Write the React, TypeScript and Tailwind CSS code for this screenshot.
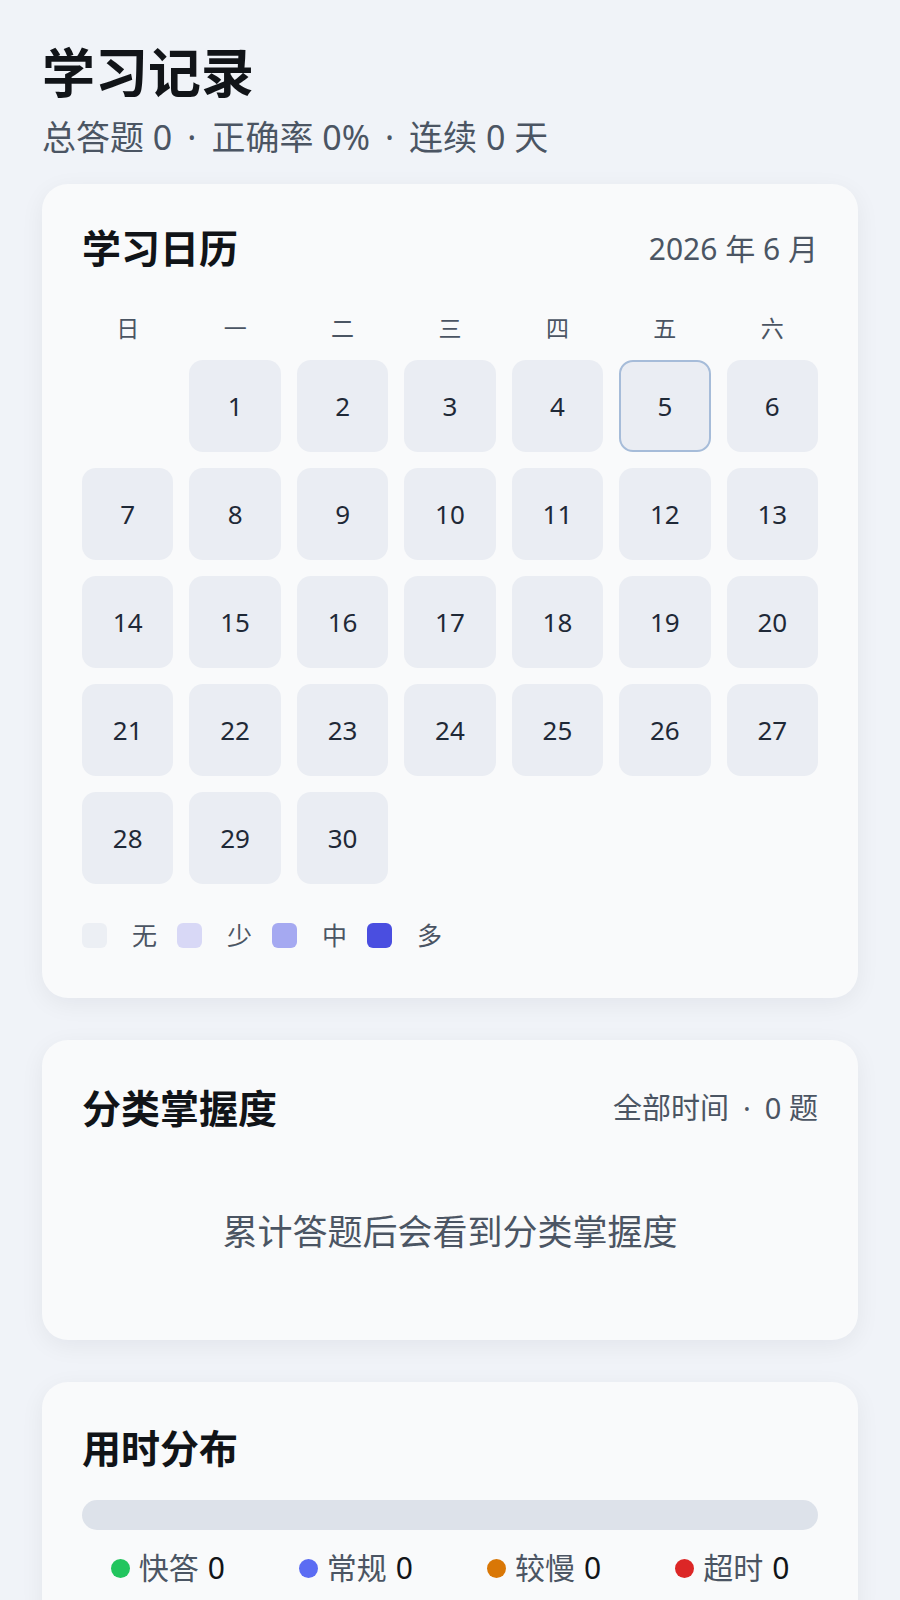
import React from 'react';

const FONT = { fontFamily: '"Noto Sans", "Noto Sans CJK SC", sans-serif' };

const WEEKDAYS = ['日', '一', '二', '三', '四', '五', '六'];

const LEVELS = [
  { label: '无', color: 'bg-[#eceff4]' },
  { label: '少', color: 'bg-[#d8d8f6]' },
  { label: '中', color: 'bg-[#a5a9f1]' },
  { label: '多', color: 'bg-[#4a4ee0]' },
];

const TIMING = [
  { label: '快答', dot: 'bg-[#22c55e]' },
  { label: '常规', dot: 'bg-[#5b6cf3]' },
  { label: '较慢', dot: 'bg-[#d97706]' },
  { label: '超时', dot: 'bg-[#dc2626]' },
];

function Dot({ className = 'mx-[15px]' }: { className?: string }) {
  return <span className={className}>·</span>;
}

function Card({ children, className = '' }: { children: React.ReactNode; className?: string }) {
  return (
    <div
      className={`rounded-[26px] bg-[#f9fafb] px-10 shadow-[0_6px_24px_rgba(15,23,42,0.06)] ${className}`}
    >
      {children}
    </div>
  );
}

function Calendar() {
  // June 2026 starts on Monday
  const cells: (number | null)[] = [null];
  for (let d = 1; d <= 30; d++) cells.push(d);

  return (
    <Card className="pt-10 pb-12">
      <div className="flex items-center justify-between">
        <h2 className="text-[39px] font-bold leading-[48px] text-[#111418]">学习日历</h2>
        <span className="text-[30px] text-[#4b5563]">2026 年 6 月</span>
      </div>

      <div className="mt-[41px] grid grid-cols-7 gap-x-4">
        {WEEKDAYS.map((w) => (
          <div key={w} className="text-center text-[23px] leading-[30px] text-[#4b5563]">
            {w}
          </div>
        ))}
      </div>

      <div className="mt-[17px] grid grid-cols-7 gap-4">
        {cells.map((d, i) =>
          d === null ? (
            <div key={`e${i}`} className="h-[92px]" />
          ) : (
            <div
              key={d}
              className={`flex h-[92px] items-center justify-center rounded-[14px] bg-[#eaedf3] text-[26px] text-[#1f2937] ${
                d === 5 ? 'border-2 border-[#a6bcd9]' : ''
              }`}
            >
              {d}
            </div>
          )
        )}
      </div>

      <div className="mt-[36px] flex items-center">
        {LEVELS.map((l) => (
          <div key={l.label} className="mr-[20px] flex items-center">
            <span className={`h-[25px] w-[25px] rounded-[6px] ${l.color}`} />
            <span className="ml-[25px] text-[25px] leading-[30px] text-[#4b5563]">{l.label}</span>
          </div>
        ))}
      </div>
    </Card>
  );
}

function Mastery() {
  return (
    <Card className="pt-[44px] pb-[86px]">
      <div className="flex items-center justify-between">
        <h2 className="text-[39px] font-bold leading-[48px] text-[#111418]">分类掌握度</h2>
        <span className="text-[29px] text-[#4b5563]">
          全部时间<Dot className="mx-[14px]" />0 题
        </span>
      </div>
      <p className="mt-[78px] text-center text-[35px] leading-[44px] text-[#4b5563]">
        累计答题后会看到分类掌握度
      </p>
    </Card>
  );
}

function Timing() {
  return (
    <Card className="pt-[42px] pb-10">
      <h2 className="text-[39px] font-bold leading-[48px] text-[#111418]">用时分布</h2>
      <div className="mt-[28px] h-[30px] rounded-full bg-[#dde2ea]" />
      <div className="mt-[20px] flex justify-center gap-[74px]">
        {TIMING.map((t) => (
          <div key={t.label} className="flex items-center">
            <span className={`h-[19px] w-[19px] rounded-full ${t.dot}`} />
            <span className="ml-[9px] text-[30px] leading-[36px] text-[#4b5563]">{t.label}</span>
            <span className="ml-[9px] text-[30px] leading-[36px] text-[#111418]">0</span>
          </div>
        ))}
      </div>
    </Card>
  );
}

export default function App() {
  return (
    <div style={FONT} className="min-h-[1600px] bg-[#f0f3f8] px-[42px] pt-[42px] pb-10">
      <h1 className="text-[53px] font-bold leading-[62px] text-[#111418]">学习记录</h1>
      <p className="mt-[12px] text-[34px] leading-[42px] text-[#4b5563]">
        总答题 0<Dot />正确率 0%<Dot />连续 0 天
      </p>

      <div className="mt-[26px] flex flex-col gap-[42px]">
        <Calendar />
        <Mastery />
        <Timing />
      </div>
    </div>
  );
}
